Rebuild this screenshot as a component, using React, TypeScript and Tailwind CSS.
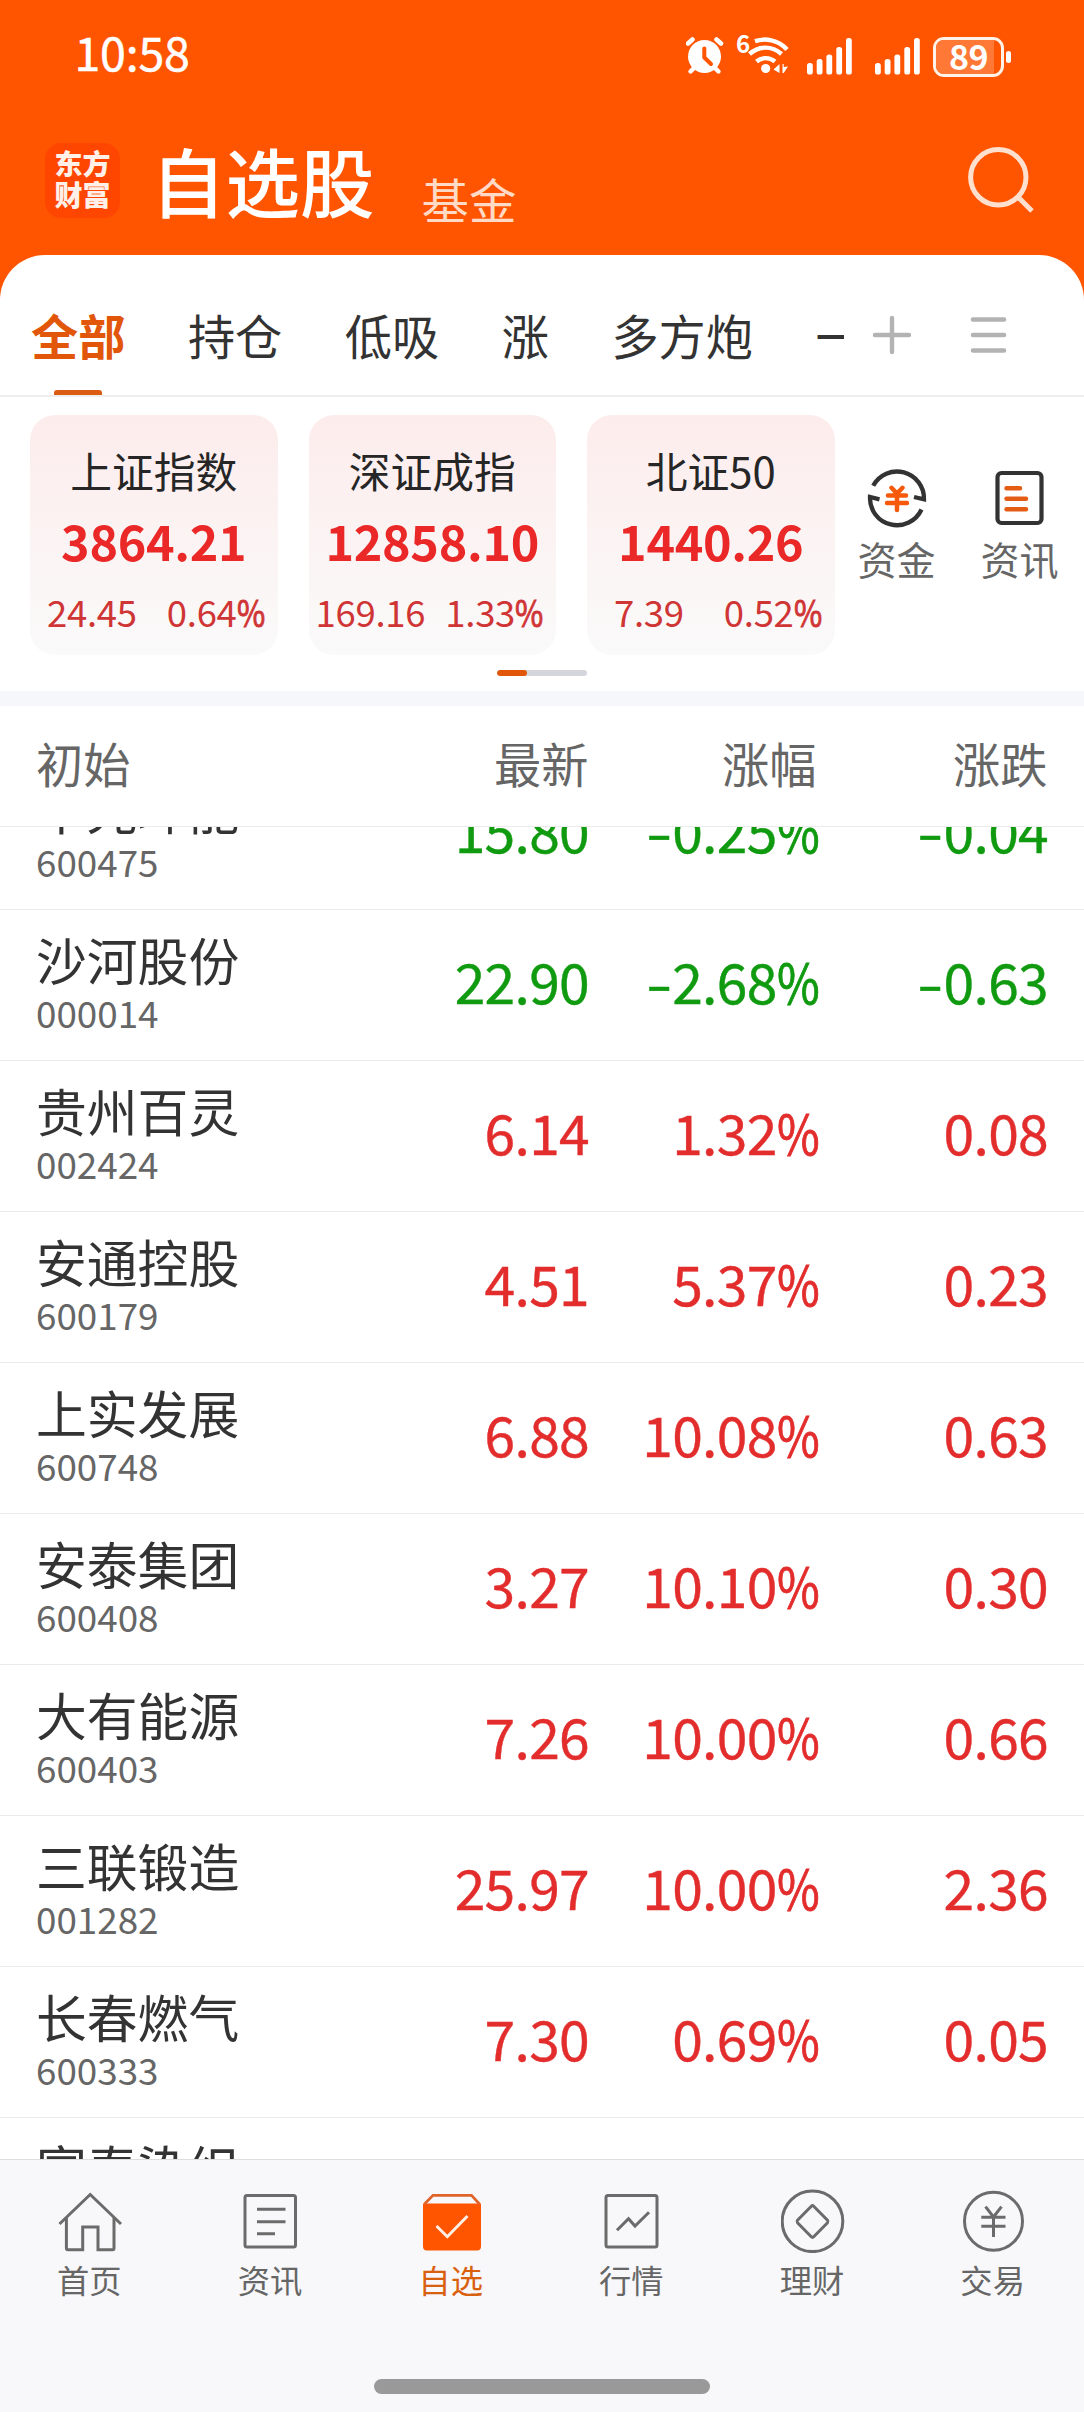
import React from "react";

type Stock = { name: string; code: string; price?: string; pct?: string; diff?: string };

const stocks: Stock[] = [
  { name: "华光环能", code: "600475", price: "15.80", pct: "-0.25%", diff: "-0.04" },
  { name: "沙河股份", code: "000014", price: "22.90", pct: "-2.68%", diff: "-0.63" },
  { name: "贵州百灵", code: "002424", price: "6.14", pct: "1.32%", diff: "0.08" },
  { name: "安通控股", code: "600179", price: "4.51", pct: "5.37%", diff: "0.23" },
  { name: "上实发展", code: "600748", price: "6.88", pct: "10.08%", diff: "0.63" },
  { name: "安泰集团", code: "600408", price: "3.27", pct: "10.10%", diff: "0.30" },
  { name: "大有能源", code: "600403", price: "7.26", pct: "10.00%", diff: "0.66" },
  { name: "三联锻造", code: "001282", price: "25.97", pct: "10.00%", diff: "2.36" },
  { name: "长春燃气", code: "600333", price: "7.30", pct: "0.69%", diff: "0.05" },
  { name: "富春染织", code: "" },
];

const indices = [
  { name: "上证指数", value: "3864.21", diff: "24.45", pct: "0.64%" },
  { name: "深证成指", value: "12858.10", diff: "169.16", pct: "1.33%" },
  { name: "北证50", value: "1440.26", diff: "7.39", pct: "0.52%" },
];

/** Number with a widened minus sign and a narrowed percent sign. */
function Num({ text }: { text: string }) {
  const negative = text.startsWith("-");
  const percent = text.endsWith("%");
  const body = text.slice(negative ? 1 : 0, percent ? -1 : undefined);
  return (
    <>
      {negative && <span className="mr-[0.02em] inline-block origin-right scale-x-[1.38]">-</span>}
      {body}
      {percent && <span className="-mr-[0.15em] inline-block origin-left scale-x-[0.84] [-webkit-text-stroke:0.9px_currentColor]">%</span>}
    </>
  );
}

function SignalBars() {
  return (
    <svg width="46" height="38" viewBox="0 0 46 38" fill="#fff">
      <rect x="0" y="26" width="5.8" height="11.5" rx="2.6" />
      <rect x="9.7" y="22" width="5.8" height="15.5" rx="2.6" />
      <rect x="19.4" y="17.5" width="5.8" height="20" rx="2.6" />
      <rect x="29.3" y="10" width="5.8" height="27.5" rx="2.6" />
      <rect x="39" y="1" width="5.8" height="36.5" rx="2.6" />
    </svg>
  );
}

function StatusBar() {
  return (
    <div className="flex h-28 items-start pl-[74.5px] pr-[73px] text-white">
      <div className="mt-[26px] text-[46.5px] leading-[50px] tracking-[-0.2px] [-webkit-text-stroke:0.5px_currentColor]">10:58</div>
      <div className="ml-auto mt-[35px] flex items-start">
        <svg className="mt-[1px]" width="40" height="40" viewBox="0 0 40 40" fill="none" strokeLinecap="round">
          <circle cx="18.5" cy="20.5" r="16.5" fill="#fff" />
          <path d="M2 7.5 6.5 3.5M35 7.5 30.5 3.5" stroke="#fff" strokeWidth="4.6" />
          <path d="M8 32 4.5 35.5M29 32 32.5 35.5" stroke="#fff" strokeWidth="4.4" />
          <path d="M18.3 12.5V21.5L25 28" stroke="#f50" strokeWidth="4" strokeLinejoin="round" />
        </svg>
        <div className="-mt-[4px] ml-[10px] w-[13px] text-[24px] font-bold leading-6">6</div>
        <svg className="-ml-[3px] mt-[1px]" width="44" height="40" viewBox="0 0 44 40" fill="none" stroke="#fff" strokeWidth="4.4">
          <path d="M9 5.2C19 1.8 32 3.5 41 13.5" />
          <path d="M3.5 18C13 9.5 26 9.5 35.5 18" />
          <path d="M10.5 25.5C16 21 23.5 21 29 25.5" />
          <circle cx="19.7" cy="32.5" r="4.6" fill="#fff" stroke="none" />
          <path d="M33.5 28V37L27.5 33.6ZM36.5 28H37.7V31L42 30.5 37.7 37H36.5Z" fill="#fff" stroke="none" />
        </svg>
        <div className="ml-[17px] mt-[2px]"><SignalBars /></div>
        <div className="ml-[22px] mt-[2px]"><SignalBars /></div>
        <div className="ml-[12px] mt-[2px] flex items-center">
          <div className="relative flex h-[40px] w-[71px] items-center justify-center overflow-hidden rounded-[11px] border-[3px] border-[#fff2e8]">
            <div className="absolute inset-y-0 left-0 w-[58px] bg-[#ff7836]" />
            <span className="relative mt-[-3px] text-[34px] font-bold leading-[34px] tracking-[-0.5px]">89</span>
          </div>
          <div className="ml-[2px] h-3 w-[5px] rounded-sm bg-white" />
        </div>
      </div>
    </div>
  );
}

function Header() {
  return (
    <header className="flex h-[143px] items-start pl-[45px]">
      <div className="mt-[31px] flex h-[75px] w-[75px] flex-col items-center rounded-[16px] bg-[#ff4600] pt-[5px] text-[28px] font-black leading-[31px] text-[#fff0e8]">
        <span>东方</span>
        <span>财富</span>
      </div>
      <h1 className="ml-[31px] mt-[28px] text-[74.5px] font-medium leading-[80px] text-white">自选股</h1>
      <span className="ml-[47px] mt-[57px] text-[47.5px] leading-[60px] text-[#ffdac6]">基金</span>
      <svg className="ml-auto mr-[48px] mt-[32px]" width="70" height="70" viewBox="0 0 70 70" fill="none" stroke="#ffe0cf" strokeWidth="5">
        <circle cx="32.3" cy="33.3" r="27.7" />
        <path d="M52 53 66 67" strokeWidth="5" />
      </svg>
    </header>
  );
}

function Tabs() {
  return (
    <div className="flex h-[142px] border-b-2 border-[#eee] pl-[31px] text-[47.2px] leading-[60px] text-[#333]">
      <div className="flex w-[813px] gap-[62.5px] overflow-hidden whitespace-nowrap pt-[50px]">
        <div className="flex shrink-0 flex-col items-center font-bold text-[#e2560a]">
          全部
          <div className="mt-auto h-[5px] w-12 rounded-t-[3px] bg-[#dc5b12]" />
        </div>
        <span className="shrink-0">持仓</span>
        <span className="shrink-0">低吸</span>
        <span className="shrink-0">涨</span>
        <span className="shrink-0">多方炮</span>
        <span className="shrink-0">一</span>
      </div>
      <svg className="ml-[27px] mt-[59px]" width="42" height="42" viewBox="0 0 42 42" stroke="#b3b3b3" strokeWidth="4.4" strokeLinecap="round">
        <path d="M21 4V38M4 21H38" />
      </svg>
      <svg className="ml-[55px] mt-[59px]" width="42" height="42" viewBox="0 0 42 42" stroke="#b3b3b3" strokeWidth="4.6" strokeLinecap="round">
        <path d="M5 5.5H36M5 21H36M5 36.5H36" />
      </svg>
    </div>
  );
}

function IndexPanel() {
  return (
    <div>
      <div className="flex pl-[30px] pt-[18px]">
        <div className="flex gap-[31px]">
          {indices.map((i) => (
            <div key={i.name} className="flex h-[240px] w-[247.5px] flex-col items-center rounded-[25px] bg-linear-to-b from-[#fdecec] to-[#fafafa] pt-[29px]">
              <div className="text-[41.8px] leading-[52px] text-[#262626]">{i.name}</div>
              <div className="mt-[14px] text-[48.5px] font-bold leading-[60px] tracking-[-0.3px] text-[#ea2828]">{i.value}</div>
              <div className="mt-[22px] flex w-full text-[36.5px] leading-[40px] tracking-[-0.3px] text-[#d03535]">
                <div className="flex w-1/2 justify-center">{i.diff}</div>
                <div className="w-1/2 whitespace-nowrap text-center"><Num text={i.pct} /></div>
              </div>
            </div>
          ))}
        </div>
        <div className="ml-[23px] mt-[51px] flex w-[78px] flex-col items-center text-[39px] leading-[50px] text-[#666]">
          <svg width="64" height="64" viewBox="0 0 64 64" fill="none" stroke="#333" strokeWidth="4.3" strokeLinecap="butt">
            <path d="M8.2 19.8A27 27 0 0 1 59 33.3L49 31" />
            <path d="M14.5 33.3 5 31A27 27 0 0 0 56.5 43.5" />
            <path d="M26.5 21.8 32 27.5 37.5 21.8M32 27.5V44M23 29.5H41M22 37H42" stroke="#f7590a" strokeWidth="4.5" strokeLinecap="round" />
          </svg>
          <span className="mt-[3px]">资金</span>
        </div>
        <div className="ml-[45px] mt-[51px] flex w-[78px] flex-col items-center text-[39px] leading-[50px] text-[#666]">
          <svg width="64" height="64" viewBox="0 0 64 64" fill="none" stroke="#333" strokeWidth="4.2" strokeLinecap="round">
            <rect x="9.5" y="7" width="44" height="50" rx="4" />
            <path d="M18.5 22.3H32M18.5 32.7H38M18.5 43.3H38" stroke="#e35d15" strokeWidth="4.5" />
          </svg>
          <span className="mt-[3px]">资讯</span>
        </div>
      </div>
      <div className="mx-auto mt-[15px] h-[6px] w-[90px] overflow-hidden rounded-full bg-[#d4d6dc]">
        <div className="h-full w-[30px] rounded-full bg-[#e2560a]" />
      </div>
      <div className="mt-[15px] h-[15px] bg-[#f6f7fa]" />
    </div>
  );
}

function StockTable() {
  return (
    <>
      <div className="flex h-[121px] items-start border-b border-[#ebebeb] pl-[36px] pt-[27px] text-[47.2px] leading-[60px] text-[#666]">
        <span className="w-[300px]">初始</span>
        <span className="w-[252.5px] text-right">最新</span>
        <span className="w-[228px] text-right">涨幅</span>
        <span className="w-[231px] text-right">涨跌</span>
      </div>
      <div className="h-[1332px] overflow-hidden">
        <div className="-mt-[68px]">
          {stocks.map((s) => (
            <div
              key={s.name}
              className={`flex h-[151px] border-b border-[#ebebeb] pl-[36px] text-[55.2px] leading-[60px] tracking-[-0.7px] ${s.diff?.startsWith("-") ? "text-[#109a10]" : "text-[#e32d2d]"}`}
            >
              <div className="w-[300px] pt-[19px] tracking-normal">
                <div className="text-[50.8px] leading-[60px] text-[#333]">{s.name}</div>
                <div className="mt-[3px] text-[36.8px] leading-[40px] text-[#666]">{s.code}</div>
              </div>
              <div className="w-[253px] pt-[40px] text-right [-webkit-text-stroke:0.4px_currentColor]">{s.price}</div>
              <div className="w-[229.5px] whitespace-nowrap pt-[40px] text-right [-webkit-text-stroke:0.4px_currentColor]">{s.pct && <Num text={s.pct} />}</div>
              <div className="w-[229.5px] whitespace-nowrap pt-[40px] text-right [-webkit-text-stroke:0.4px_currentColor]">{s.diff && <Num text={s.diff} />}</div>
            </div>
          ))}
        </div>
      </div>
    </>
  );
}

const navItems: { label: string; active?: boolean; icon: React.ReactNode }[] = [
  {
    label: "首页",
    icon: (
      <>
        <path d="M1.5 35 32.2 5.5 63 35" />
        <path d="M8.4 29V59Q8.4 60.7 10 60.7H24.7V38H40V60.7H54.5Q56 60.7 56 59V29" />
      </>
    ),
  },
  {
    label: "资讯",
    icon: (
      <>
        <rect x="6" y="6.5" width="50.5" height="51.5" rx="2" />
        <path d="M18 20.3H46.5M18 32.7H46.5M18 44.7H36" />
      </>
    ),
  },
  {
    label: "自选",
    active: true,
    icon: (
      <>
        <path d="M3 14.5H61V57.5Q61 61.5 57 61.5H7Q3 61.5 3 57.5Z" fill="#f50" stroke="none" />
        <path d="M4.5 15 13 6.3H51.5L59.5 15" stroke="#e0632a" strokeWidth="2.7" />
        <path d="M16.5 37 27.3 47.7 47.5 27" stroke="#fff0e6" />
      </>
    ),
  },
  {
    label: "行情",
    icon: (
      <>
        <rect x="6" y="6.5" width="51" height="51.5" rx="2" />
        <path d="M17 41.3 28.5 29.7 35 37 49 23.3" />
      </>
    ),
  },
  {
    label: "理财",
    icon: (
      <>
        <circle cx="31.5" cy="32.3" r="30.3" />
        <path d="M30.3 17.2Q31.5 16 32.7 17.2L46.5 31.3Q47.5 32.5 46.5 33.7L32.7 47.8Q31.5 49 30.3 47.8L16.5 33.7Q15.5 32.5 16.5 31.3Z" />
      </>
    ),
  },
  {
    label: "交易",
    icon: (
      <>
        <circle cx="31.5" cy="32.2" r="29" />
        <path d="M23.5 17.7 31.5 28 39.5 17.7M31.5 28V48M19.3 28.3H43.5M19.3 37.3H43.5" />
      </>
    ),
  },
];

function BottomNav() {
  return (
    <nav className="flex h-[253px] shrink-0 flex-col border-t border-[#dddde0] bg-[#f8f8fa] pt-[29px]">
      <div className="grid grid-cols-6">
        {navItems.map((n) => (
          <div key={n.label} className={`flex flex-col items-center text-[32.3px] leading-[40px] ${n.active ? "text-[#d9600f]" : "text-[#666]"}`}>
            <svg width="64" height="64" viewBox="0 0 64 64" fill="none" stroke="#6b6b6b" strokeWidth="3">
              {n.icon}
            </svg>
            <span className="mr-[2px] mt-[5.5px]">{n.label}</span>
          </div>
        ))}
      </div>
      <div className="mx-auto mb-[18px] mt-auto h-[15px] w-[336px] rounded-full bg-[#999]" />
    </nav>
  );
}

export default function App() {
  return (
    <div className="flex h-[2412px] w-[1084px] flex-col overflow-hidden bg-[#f50] font-['Noto_Sans_CJK_SC',sans-serif]">
      <StatusBar />
      <Header />
      <main className="rounded-t-[45px] bg-white">
        <Tabs />
        <IndexPanel />
        <StockTable />
      </main>
      <BottomNav />
    </div>
  );
}
